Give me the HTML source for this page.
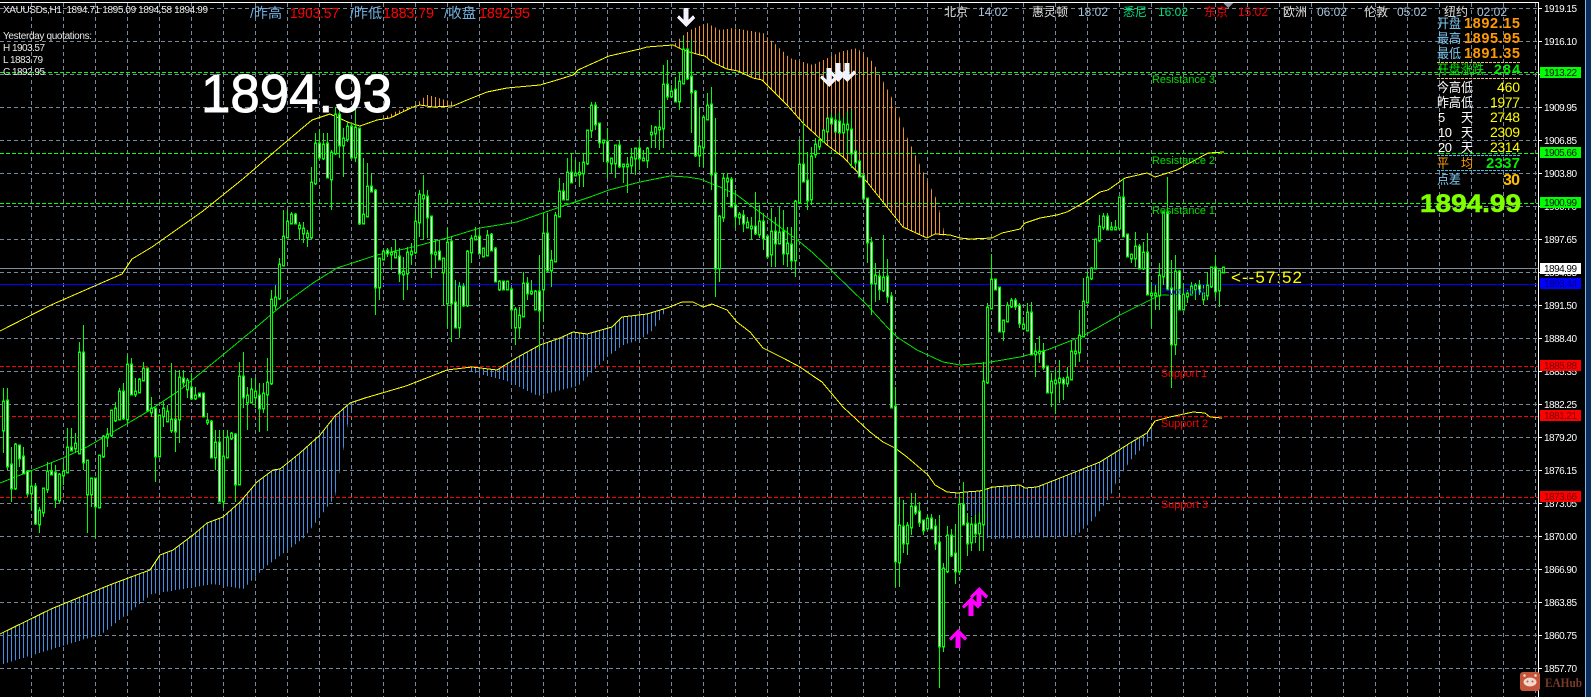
<!DOCTYPE html>
<html><head><meta charset="utf-8"><title>XAUUSDs,H1</title>
<style>
html,body{margin:0;padding:0;background:#000;width:1591px;height:697px;overflow:hidden}
svg{display:block;font-family:"Liberation Sans","Noto Sans CJK SC",sans-serif;shape-rendering:crispEdges}
.g{stroke:#778899;stroke-width:1;stroke-dasharray:4 3;fill:none}
.ax{font-size:10px;fill:#fff}
.cy{fill:#7ec8f0;font-size:13px}
.w{fill:#fff;font-size:13px}
.y{fill:#ffff00;font-size:14px}
.o{fill:#ff9a00;font-size:14.5px;font-weight:bold}
.tl{fill:#e8e8e8;font-size:10px}
.ck{font-size:12px}
.lb{font-size:10px;fill:#111}
</style></head><body>
<svg width="1591" height="697" viewBox="0 0 1591 697" xmlns="http://www.w3.org/2000/svg">
<defs>
<pattern id="po" width="4" height="8" patternUnits="userSpaceOnUse"><rect x="3" width="1" height="8" fill="#ee9226"/></pattern>
<pattern id="pb" width="4" height="8" patternUnits="userSpaceOnUse"><rect x="3" width="1" height="8" fill="#3f8fe4"/></pattern>
<path id="bw" d="M7 401V466M11 465V488M19 446V458M23 457V473M27 472V493M35 487V523M51 472V474M55 473V499M71 448V450M83 353V462M95 479V506M123 392V418M131 365V394M147 369V410M155 409V456M175 420V431M183 379V382M191 388V398M199 394V396M203 394V416M211 422V457M219 443V501M235 435V484M243 377V397M259 396V408M295 215V223M319 144V157M327 144V177M339 115V145M351 127V157M359 129V223M371 187V191M375 191V287M387 251V253M399 257V273M427 197V217M431 217V253M439 252V259M451 242V303M455 303V327M463 287V305M479 237V253M491 235V250M495 249V281M503 282V289M511 290V309M527 284V293M539 292V310M547 234V270M563 192V199M571 173V182M595 106V124M599 124V142M607 142V161M619 146V166M639 149V158M667 85V96M675 90V101M687 50V78M691 77V92M695 92V155M711 105V174M715 174V268M731 180V206M735 206V216M743 216V223M755 227V233M763 222V238M767 237V256M775 232V243M783 232V253M791 245V260M803 165V181M807 181V200M831 119V123M835 121V131M839 122V132M851 130V153M855 152V162M859 162V176M863 176V198M867 199V242M871 243V283M879 277V289M887 277V296M891 297V407M895 407V561M903 527V543M915 507V512M919 512V522M923 521V530M931 519V528M935 527V543M939 543V646M951 536V555M955 554V571M963 505V524M967 524V543M975 525V533M995 280V289M999 288V331M1015 301V306M1019 306V323M1031 313V354M1043 352V367M1047 367V392M1063 380V383M1107 217V229M1123 198V236M1127 235V256M1139 247V268M1147 253V294M1167 213V289M1171 289V344M1179 272V309M1199 286V291M1215 268V291"/>
<path id="bb" d="M3 402V430M15 445V488M31 487V493M39 511V524M43 489V512M47 472V489M59 475V500M63 472V475M67 448V472M75 444V448M79 353V453M87 461V494M91 479V494M99 456V507M103 437V456M107 435V437M111 411V435M115 409V420M119 392V419M127 365V419M135 392V394M139 380V392M143 369V380M151 409V412M159 416V456M163 409V416M167 412V421M171 420V430M179 378V419M187 381V389M195 396V398M207 421V422M215 443V457M223 457V501M227 438V457M231 434V438M239 377V484M247 396V402M251 390V402M255 392V397M263 394V408M267 383V394M271 300V383M275 298V305M279 265V298M283 237V265M287 222V237M291 215V223M299 226V228M303 229V233M307 234V237M311 183V237M315 144V183M323 145V158M331 153V179M335 115V153M343 139V145M347 127V139M355 128V157M363 215V223M367 187V216M379 259V287M383 252V259M391 253V254M395 253V257M403 272V274M407 253V273M411 252V254M415 222V252M419 195V222M423 196V198M435 253V254M443 259V272M447 243V303M459 287V327M467 252V305M471 239V252M475 237V239M483 249V256M487 236V255M499 282V289M507 282V289M515 310V327M519 316V327M523 284V316M531 292V293M535 292V309M543 234V289M551 261V270M555 216V261M559 192V216M567 173V199M575 174V175M579 173V174M583 163V173M587 131V163M591 106V130M603 141V142M611 159V163M615 146V163M623 165V166M627 165V166M631 158V165M635 149V158M643 159V160M647 149V160M651 133V134M655 128V133M659 128V129M663 85V128M671 92V96M679 82V101M683 50V83M699 147V155M703 118V147M707 106V119M719 217V268M723 179V217M727 179V181M739 215V217M747 223V227M751 227V228M759 222V234M771 232V254M779 233V243M787 244V253M795 202V260M799 165V202M811 157V199M815 145V154M819 141V146M823 131V141M827 119V131M843 125V132M847 125V129M875 276V283M883 278V290M899 526V562M907 526V543M911 507V527M927 519V528M943 569V646M947 536V571M959 505V571M971 525V542M979 524V533M983 382V524M987 308V382M991 280V308M1003 321V331M1007 306V321M1011 301V306M1023 325V328M1027 313V330M1035 352V354M1039 352V353M1051 382V392M1055 381V383M1059 379V382M1067 378V383M1071 352V379M1075 352V353M1079 336V352M1083 302V336M1087 278V302M1091 269V278M1095 240V268M1099 227V240M1103 217V227M1111 228V229M1115 228V229M1119 198V228M1131 255V258M1135 247V258M1143 253V268M1151 294V295M1155 294V295M1159 276V295M1163 213V276M1175 272V344M1183 295V309M1187 294V296M1191 287V294M1195 286V289M1203 294V299M1207 286V295M1211 268V286M1219 271V290M1223 268V272"/>
<polygon id="dn" points="-2.5,0 2.5,0 2.5,12 7,7 9,10 0,19 -9,10 -7,7 -2.5,12"/>
</defs>

<!-- grid -->
<path class="g" d="M0 8.5H1538M0 41.5H1538M0 74.5H1538M0 107.5H1538M0 140.5H1538M0 173.5H1538M0 206.5H1538M0 239.5H1538M0 272.5H1538M0 305.5H1538M0 338.5H1538M0 371.5H1538M0 404.5H1538M0 437.5H1538M0 470.5H1538M0 503.5H1538M0 536.5H1538M0 569.5H1538M0 602.5H1538M0 635.5H1538M0 668.5H1538"/>
<path class="g" d="M31.5 3V697M63.5 3V697M95.5 3V697M127.5 3V697M159.5 3V697M191.5 3V697M223.5 3V697M255.5 3V697M287.5 3V697M319.5 3V697M351.5 3V697M383.5 3V697M415.5 3V697M447.5 3V697M479.5 3V697M511.5 3V697M543.5 3V697M575.5 3V697M607.5 3V697M639.5 3V697M671.5 3V697M703.5 3V697M735.5 3V697M767.5 3V697M799.5 3V697M831.5 3V697M863.5 3V697M895.5 3V697M927.5 3V697M959.5 3V697M991.5 3V697M1023.5 3V697M1055.5 3V697M1087.5 3V697M1119.5 3V697M1151.5 3V697M1183.5 3V697M1215.5 3V697M1247.5 3V697M1279.5 3V697M1311.5 3V697M1343.5 3V697M1375.5 3V697M1407.5 3V697M1439.5 3V697M1471.5 3V697M1503.5 3V697M1535.5 3V697"/>

<!-- level lines -->
<path fill="none" stroke="#00ff00" stroke-dasharray="4 2" d="M0 72.5H1538M0 153.5H1538M0 203.5H1538"/>
<path fill="none" stroke="#ff0000" stroke-dasharray="4 2" d="M0 366.5H1538M0 416.5H1538M0 497.5H1538"/>
<path fill="none" stroke="#8090a0" d="M0 268.5H1538"/>
<path fill="none" stroke="#0000ff" stroke-width="1" d="M0 284.5H1538"/>

<!-- ribbons -->
<polygon fill="url(#po)" points="674,45 680,38 690,30 707,23 720,30 733,28 763,33 773,42 790,58 813,65 840,52 857,48 873,62 893,100 907,137 927,180 937,200 945,236 937,234 927,238 903,227 887,207 867,182 843,157 827,145 803,123 787,105 762,80 753,78 738,71 727,69 712,62 705,56 700,55 683,50"/>
<polygon fill="url(#po)" points="383,118 395,112 415,105 427,95 435,97 453,102 455,106 433,107 420,105 413,107 390,118"/>
<polygon fill="url(#pb)" points="0,634 51,609 112,584 150,570 160,555 173,550 193,535 207,523 223,517 240,502 257,482 273,470 280,469 300,453 320,435 335,416 350,403 358,400 350,412 335,497 304,538 264,568 243,589 213,584 152,594 102,634 0,665"/>
<polygon fill="url(#pb)" points="468,368 472,367 497,370 518,357 540,345 560,338 573,332 587,334 612,327 622,317 647,314 667,308 667,309 653,330 640,340 623,345 613,353 609,355 578,386 538,396 507,381 472,372"/>
<polygon fill="url(#pb)" points="955,493 965,492 980,491 993,487 1020,485 1025,488 1037,487 1055,480 1080,470 1100,462 1116,452 1130,443 1147,433 1155,421 1152,437 1140,450 1130,461 1116,483 1110,497 1093,520 1077,535 1060,537 988,539 967,510 955,498"/>

<!-- moving averages -->
<polyline fill="none" stroke="#00e600" points="0,483 33,470 63,458 87,447 130,422 147,412 180,390 213,363 253,330 280,307 313,283 337,268 377,255 413,247 447,238 480,228 517,222 557,208 590,197 609,190 640,182 670,176 687,177 700,179 720,187 737,195 757,210 800,242 813,253 833,272 867,305 888,328 897,337 917,350 943,362 960,365 985,363 1020,357 1047,350 1083,336 1120,315 1160,295 1169,295"/>
<polyline fill="none" stroke="#ffff00" stroke-width="1" points="0,331 51,305 122,274 132,259 152,247 203,211 244,178 280,147 300,130 312,120 330,114 350,123 360,126 377,120 390,118 413,107 420,105 433,107 453,106 467,100 487,92 507,88 540,85 557,80 573,75 578,70 609,56 640,49 647,47 673,45 683,50 700,55 705,56 712,62 727,69 738,71 753,78 762,80 787,105 803,123 827,145 843,157 867,182 887,207 903,227 927,238 935,234 950,235 960,238 970,239 992,238 1002,233 1020,229 1025,223 1040,218 1057,215 1067,212 1085,202 1100,192 1108,190 1125,178 1147,173 1155,177 1177,170 1208,153 1224,152"/>
<polyline fill="none" stroke="#ffff00" stroke-width="1" points="0,634 51,609 112,584 150,570 160,555 173,550 193,535 207,523 223,517 240,502 257,482 273,470 280,469 300,453 320,435 335,416 350,403 365,398 406,386 447,370 472,367 497,370 518,357 540,345 560,338 573,332 587,334 612,327 622,317 647,314 667,308 682,302 693,302 703,307 712,304 727,310 737,322 750,332 763,348 783,358 800,367 813,376 822,382 843,407 870,432 883,442 895,448 907,457 928,475 935,485 947,492 958,493 965,492 980,491 993,487 1020,485 1025,488 1037,487 1055,480 1080,470 1100,462 1116,452 1130,443 1147,433 1155,421 1170,417 1193,412 1205,413 1210,417 1222,418"/>

<!-- candles -->
<g transform="translate(.5 0)" fill="none">
<path stroke="#00ff00" d="M3 388V453M7 388V470M11 447V502M15 443V490M19 445V467M23 447V473M27 470V497M31 470V510M35 483V525M39 507V533M43 488V517M47 462V493M51 462V475M55 465V508M59 473V503M63 462V485M67 428V473M71 428V450M75 433V453M79 342V453M83 325V470M87 460V533M91 478V507M95 478V538M99 455V507M103 435V458M107 428V447M111 410V437M115 402V422M119 388V420M123 383V420M127 355V423M131 358V395M135 378V397M139 378V393M143 362V380M147 368V412M151 397V417M155 408V482M159 415V457M163 402V427M167 405V422M171 363V433M175 370V452M179 370V443M183 370V387M187 378V398M191 373V400M195 387V400M199 394V397M203 393V417M207 413V425M211 420V458M215 430V470M219 430V502M223 430V508M227 430V458M231 432V440M235 433V502M239 362V485M243 352V408M247 387V430M251 378V403M255 378V408M259 383V432M263 383V413M267 358V431M271 290V385M275 285V310M279 258V300M283 210V266M287 210V238M291 212V224M295 213V224M299 222V240M303 222V243M307 230V247M311 167V239M315 133V185M319 130V160M323 133V160M327 133V178M331 150V210M335 107V155M339 110V158M343 128V177M347 122V142M351 123V158M355 90V162M359 128V225M363 158V224M367 163V217M371 173V192M375 189V315M379 258V300M383 250V260M387 248V257M391 247V270M395 240V257M399 248V282M403 257V300M407 247V290M411 243V265M415 210V254M419 190V237M423 175V240M427 190V238M431 217V278M435 240V268M439 240V260M443 258V305M447 228V328M451 237V342M455 280V327M459 282V338M463 283V307M467 250V307M471 235V263M475 227V240M479 230V253M483 248V256M487 230V256M491 233V250M495 247V282M499 280V291M503 282V290M507 282V290M511 287V328M515 307V345M519 307V338M523 272V317M527 277V300M531 280V295M535 290V310M539 255V350M543 213V322M547 213V272M551 250V287M555 212V262M559 178V217M563 183V200M567 158V200M571 153V183M575 160V175M579 162V187M583 153V187M587 130V165M591 102V138M595 102V130M599 123V148M603 141V162M607 128V178M611 159V173M615 145V178M619 140V168M623 165V183M627 157V193M631 148V173M635 148V175M639 140V170M643 150V160M647 147V168M651 125V148M655 126V148M659 110V150M663 65V148M667 60V100M671 85V97M675 77V102M679 72V110M683 37V84M687 48V80M691 40V133M695 90V157M699 107V167M703 115V167M707 93V120M711 87V190M715 118V297M719 215V282M723 173V222M727 173V197M731 177V207M735 190V228M739 212V225M743 210V232M747 217V228M751 217V240M755 192V235M759 205V238M763 213V250M767 237V257M771 208V267M775 217V267M779 207V243M783 210V265M787 227V267M791 227V270M795 200V277M799 140V204M803 122V182M807 152V210M811 147V205M815 138V158M819 137V150M823 130V142M827 118V132M831 113V123M835 115V132M839 112V133M843 117V134M847 112V153M851 110V168M855 152V167M859 160V177M863 175V200M867 198V263M871 237V315M875 263V302M879 270V300M883 235V292M887 259V303M891 292V408M895 387V587M899 497V587M903 500V553M907 522V555M911 493V535M915 493V515M919 502V527M923 520V535M927 515V528M931 514V528M935 519V550M939 515V688M943 563V652M947 526V573M951 529V557M955 524V584M959 496V575M963 482V525M967 513V556M971 517V551M975 515V543M979 513V551M983 362V551M987 303V384M991 254V308M995 280V290M999 287V332M1003 321V341M1007 302V322M1011 298V308M1015 298V310M1019 303V328M1023 317V330M1027 303V330M1031 302V355M1035 343V377M1039 336V363M1043 343V370M1047 367V393M1051 373V407M1055 370V414M1059 360V403M1063 377V400M1067 367V387M1071 340V380M1075 340V367M1079 310V362M1083 278V337M1087 272V302M1091 267V280M1095 240V268M1099 215V242M1103 213V230M1107 213V230M1111 222V230M1115 220V230M1119 198V228M1123 178V237M1127 235V257M1131 255V263M1135 232V267M1139 244V268M1143 242V270M1147 233V295M1151 282V328M1155 285V310M1159 263V310M1163 213V285M1167 177V290M1171 260V388M1175 255V355M1179 270V310M1183 283V310M1187 290V303M1191 282V295M1195 283V300M1199 280V295M1203 285V305M1207 272V300M1211 268V288M1215 255V298M1219 270V307M1223 267V272"/>
<use href="#bb" stroke="#00ff00" stroke-width="3" stroke-linecap="square"/>
<use href="#bw" stroke="#00ff00" stroke-width="3" stroke-linecap="square"/>
<use href="#bb" stroke="#000" stroke-width="1"/>
<use href="#bw" stroke="#fff" stroke-width="1"/>
</g>

<!-- arrows -->
<g fill="#f2f2ff">
<use href="#dn" transform="translate(686 8)"/>
<use href="#dn" transform="translate(847 63)"/>
<use href="#dn" transform="translate(838 63)"/>
<use href="#dn" transform="translate(829 68)"/>
</g>
<g fill="#ff00ff">
<use href="#dn" transform="translate(979 606) scale(1 -1)"/>
<use href="#dn" transform="translate(971 616) scale(1 -1)"/>
<use href="#dn" transform="translate(958 648) scale(1 -1)"/>
</g>
<polygon points="1223,3 1233,3 1228,8" fill="#8a95a5"/>

<!-- level labels -->
<g font-size="11" fill="#00e000">
<text x="1152" y="83" textLength="63" lengthAdjust="spacingAndGlyphs">Resistance 3</text>
<text x="1152" y="164" textLength="63" lengthAdjust="spacingAndGlyphs">Resistance 2</text>
<text x="1152" y="214" textLength="63" lengthAdjust="spacingAndGlyphs">Resistance 1</text>
</g>
<g font-size="11" fill="#f00000">
<text x="1161" y="377" textLength="46" lengthAdjust="spacingAndGlyphs">Support 1</text>
<text x="1161" y="427" textLength="47" lengthAdjust="spacingAndGlyphs">Support 2</text>
<text x="1161" y="508" textLength="47" lengthAdjust="spacingAndGlyphs">Support 3</text>
</g>
<text x="1161" y="295" font-size="10" fill="#0000c0" textLength="44" lengthAdjust="spacingAndGlyphs">Pivot Point</text>
<text x="1231" y="283" font-size="17" fill="#ffff00" textLength="71" lengthAdjust="spacing">&lt;--57:52</text>

<!-- top left -->
<rect x="0" y="2" width="1539" height="1" fill="#fff"/>
<g class="tl">
<text x="3" y="13" textLength="205" xml:space="preserve">XAUUSDs,H1  1894.71 1895.09 1894.58 1894.99</text>
<text x="3" y="39" textLength="89">Yesterday quotations:</text>
<text x="3" y="51" textLength="42">H 1903.57</text>
<text x="3" y="63" textLength="40">L 1883.79</text>
<text x="3" y="75" textLength="42">C 1892.95</text>
</g>
<g font-size="14">
<text x="250" y="18" fill="#6fb0e0" textLength="32" lengthAdjust="spacingAndGlyphs">/昨高</text>
<text x="290" y="18" fill="#ff0000" textLength="49" lengthAdjust="spacingAndGlyphs" font-size="15">1903.57</text>
<text x="350" y="18" fill="#6fb0e0" textLength="32" lengthAdjust="spacingAndGlyphs">/昨低</text>
<text x="383" y="18" fill="#ff0000" textLength="51" lengthAdjust="spacingAndGlyphs" font-size="15">1883.79</text>
<text x="444" y="18" fill="#6fb0e0" textLength="32" lengthAdjust="spacingAndGlyphs">/收盘</text>
<text x="479" y="18" fill="#ff0000" textLength="51" lengthAdjust="spacingAndGlyphs" font-size="15">1892.95</text>
</g>
<text x="201" y="112" font-size="54" fill="#fff" stroke="#fff" stroke-width=".9" textLength="191" lengthAdjust="spacingAndGlyphs">1894.93</text>

<!-- clocks -->
<g class="ck">
<text x="944" y="16" fill="#e0e0e0" textLength="24" lengthAdjust="spacingAndGlyphs">北京</text><text x="978" y="16" fill="#a9c4dc" textLength="30">14:02</text>
<text x="1032" y="16" fill="#e0e0e0" textLength="36" lengthAdjust="spacingAndGlyphs">惠灵顿</text><text x="1078" y="16" fill="#a9c4dc" textLength="30">18:02</text>
<text x="1123" y="16" fill="#00e080" textLength="24" lengthAdjust="spacingAndGlyphs">悉尼</text><text x="1158" y="16" fill="#00e080" textLength="30">16:02</text>
<text x="1204" y="16" fill="#f00000" textLength="24" lengthAdjust="spacingAndGlyphs">东京</text><text x="1238" y="16" fill="#f00000" textLength="30">15:02</text>
<text x="1283" y="16" fill="#e0e0e0" textLength="24" lengthAdjust="spacingAndGlyphs">欧洲</text><text x="1317" y="16" fill="#a9c4dc" textLength="30">06:02</text>
<text x="1364" y="16" fill="#e0e0e0" textLength="24" lengthAdjust="spacingAndGlyphs">伦敦</text><text x="1397" y="16" fill="#a9c4dc" textLength="30">05:02</text>
<text x="1444" y="16" fill="#e0e0e0" textLength="24" lengthAdjust="spacingAndGlyphs">纽约</text><text x="1477" y="16" fill="#a9c4dc" textLength="30">02:02</text>
</g>

<!-- panel -->
<text class="cy" x="1437" y="28" textLength="24" lengthAdjust="spacingAndGlyphs">开盘</text><text class="o" x="1464" y="28" textLength="56">1892.15</text>
<text class="cy" x="1437" y="43" textLength="24" lengthAdjust="spacingAndGlyphs">最高</text><text class="o" x="1464" y="43" textLength="56">1895.95</text>
<text class="cy" x="1437" y="58" textLength="24" lengthAdjust="spacingAndGlyphs">最低</text><text class="o" x="1464" y="58" textLength="56">1891.35</text>
<path d="M1437 62.5H1520M1437 78.5H1520" stroke="#f0c080" stroke-dasharray="3 1" fill="none"/>
<text x="1437" y="74" font-size="13" fill="#00ee00" textLength="47" lengthAdjust="spacingAndGlyphs">开盘涨跌</text>
<text x="1494" y="74" font-size="14" font-weight="bold" fill="#00ee00" textLength="26">284</text>
<text class="w" x="1437" y="92" textLength="36" lengthAdjust="spacingAndGlyphs">今高低</text><text class="y" x="1497" y="92" textLength="23">460</text>
<text class="w" x="1437" y="107" textLength="36" lengthAdjust="spacingAndGlyphs">昨高低</text><text class="y" x="1490" y="107" textLength="30">1977</text>
<text class="w" x="1438" y="122">5</text><text class="w" x="1461" y="122" textLength="12" lengthAdjust="spacingAndGlyphs">天</text><text class="y" x="1490" y="122" textLength="30">2748</text>
<text class="w" x="1438" y="137" textLength="14">10</text><text class="w" x="1461" y="137" textLength="12" lengthAdjust="spacingAndGlyphs">天</text><text class="y" x="1490" y="137" textLength="30">2309</text>
<text class="w" x="1438" y="152" textLength="14">20</text><text class="w" x="1461" y="152" textLength="12" lengthAdjust="spacingAndGlyphs">天</text><text class="y" x="1490" y="152" textLength="30">2314</text>
<path d="M1437 155.5H1520M1437 170.5H1520" stroke="#40c0e0" stroke-dasharray="3 1" fill="none"/>
<text x="1437" y="168" font-size="13" fill="#ff9a00" textLength="12" lengthAdjust="spacingAndGlyphs">平</text><text x="1461" y="168" font-size="13" fill="#ff9a00" textLength="12" lengthAdjust="spacingAndGlyphs">均</text>
<text x="1486" y="168" font-size="15" font-weight="bold" fill="#00ee00" textLength="34">2337</text>
<text class="cy" x="1437" y="184" textLength="24" lengthAdjust="spacingAndGlyphs">点差</text>
<text x="1503" y="185" font-size="16" font-weight="bold" fill="#ffc000" textLength="17">30</text>
<text x="1420" y="212" font-size="25" font-weight="bold" fill="#7fff00" stroke="#7fff00" stroke-width=".6" textLength="101" lengthAdjust="spacingAndGlyphs">1894.99</text>

<!-- axis -->
<rect x="1538" y="2" width="47" height="695" fill="#000"/>
<rect x="1538" y="2" width="1" height="695" fill="#fff"/>
<rect x="1585" y="0" width="1" height="697" fill="#7fb8e8"/>
<rect x="1586" y="0" width="5" height="697" fill="#0a2f5c"/>
<path stroke="#fff" d="M1539 8.5h3M1539 41.5h3M1539 74.5h3M1539 107.5h3M1539 140.5h3M1539 173.5h3M1539 206.5h3M1539 239.5h3M1539 272.5h3M1539 305.5h3M1539 338.5h3M1539 371.5h3M1539 404.5h3M1539 437.5h3M1539 470.5h3M1539 503.5h3M1539 536.5h3M1539 569.5h3M1539 602.5h3M1539 635.5h3M1539 668.5h3"/>
<g class="ax">
<text x="1544" y="12" textLength="33">1919.15</text>
<text x="1544" y="45" textLength="33">1916.10</text>
<text x="1544" y="111" textLength="33">1909.95</text>
<text x="1544" y="144" textLength="33">1906.85</text>
<text x="1544" y="177" textLength="33">1903.80</text>
<text x="1544" y="210" textLength="33">1900.70</text>
<text x="1544" y="243" textLength="33">1897.65</text>
<text x="1544" y="276" textLength="33">1894.55</text>
<text x="1544" y="309" textLength="33">1891.50</text>
<text x="1544" y="342" textLength="33">1888.40</text>
<text x="1544" y="375" textLength="33">1885.35</text>
<text x="1544" y="408" textLength="33">1882.25</text>
<text x="1544" y="441" textLength="33">1879.20</text>
<text x="1544" y="474" textLength="33">1876.15</text>
<text x="1544" y="507" textLength="33">1873.05</text>
<text x="1544" y="540" textLength="33">1870.00</text>
<text x="1544" y="573" textLength="33">1866.90</text>
<text x="1544" y="606" textLength="33">1863.85</text>
<text x="1544" y="639" textLength="33">1860.75</text>
<text x="1544" y="672" textLength="33">1857.70</text>
</g>
<rect x="1540" y="67" width="41" height="11" fill="#00ff00"/><text class="lb" x="1544" y="76" textLength="33">1913.22</text>
<rect x="1540" y="147" width="41" height="11" fill="#00ff00"/><text class="lb" x="1544" y="156" textLength="33">1905.66</text>
<rect x="1540" y="197" width="41" height="11" fill="#00ff00"/><text class="lb" x="1544" y="206" textLength="33">1900.99</text>
<rect x="1540" y="263" width="41" height="11" fill="#fff"/><text class="lb" x="1544" y="272" textLength="33" style="fill:#000">1894.99</text>
<rect x="1540" y="278" width="41" height="11" fill="#0000ff"/><text class="lb" x="1544" y="287" textLength="33" style="fill:#000070">1893.44</text>
<rect x="1540" y="360" width="41" height="11" fill="#ff0000"/><text class="lb" x="1544" y="369" textLength="33" style="fill:#700000">1885.88</text>
<rect x="1540" y="410" width="41" height="11" fill="#ff0000"/><text class="lb" x="1544" y="419" textLength="33" style="fill:#700000">1881.21</text>
<rect x="1540" y="491" width="41" height="11" fill="#ff0000"/><text class="lb" x="1544" y="500" textLength="33" style="fill:#700000">1873.66</text>

<!-- watermark -->
<g style="shape-rendering:auto">
<rect x="1520" y="672" width="20" height="19" rx="3" fill="#c4553a"/>
<ellipse cx="1530" cy="682" rx="6.5" ry="4.5" fill="#f0d8cc"/>
<circle cx="1524.5" cy="675.5" r="1.3" fill="#f0d8cc"/><circle cx="1535.5" cy="675.5" r="1.3" fill="#f0d8cc"/>
<circle cx="1527.5" cy="681.5" r="1" fill="#c4553a"/><circle cx="1532.5" cy="681.5" r="1" fill="#c4553a"/>
</g>
<text x="1545" y="687" font-family="Liberation Serif,serif" font-size="13" font-weight="bold" fill="#7d3a2a" textLength="37" lengthAdjust="spacingAndGlyphs">EAHub</text>
</svg>
</body></html>
